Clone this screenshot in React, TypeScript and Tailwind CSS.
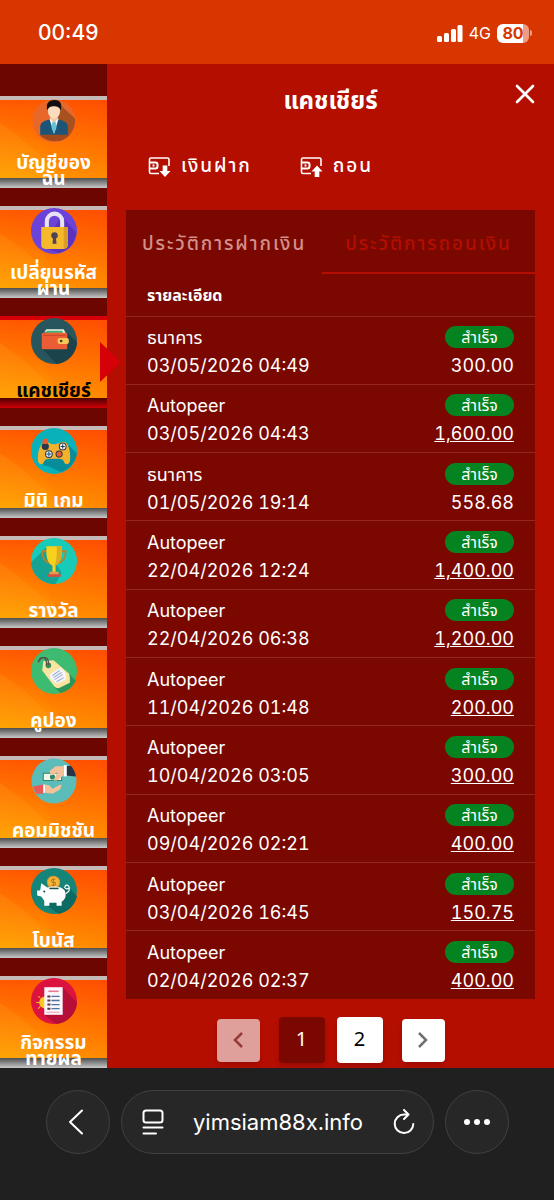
import { useState } from 'react';
import { LuX } from 'react-icons/lu';

interface MenuItem {
  id: string;
  label: string;
  art: React.ReactNode;
}

interface Transaction {
  id: number;
  channel: string;
  date: string;
  amount: string;
  hasDetail: boolean;
}

const AccountArt = () => (
  <>
    <circle cx="22.500" cy="22.500" r="21" fill="#e8682c" />
    <path d="M28 6L43 20A21 21 0 0 1 28 42L9 35Z" fill="#a9501f" />
    <path d="M8 36H38A21 21 0 0 1 8 36Z" fill="#a24a1c" />
    <path d="M9 36V28C9 24 13 22 18 21H27C32 22 36 24 36 28V36Z" fill="#1d5579" />
    <path d="M18 20L22.500 35L27 20Z" fill="#fff" />
    <path d="M21 23H24L25 29L22.500 35L20 29Z" fill="#65c3d6" />
    <path d="M19 15H26V21L22.500 24L19 21Z" fill="#f1c9a5" />
    <ellipse cx="22.500" cy="12.500" rx="6" ry="7.500" fill="#fbdcbc" />
    <path d="M16 12C14 5 18 2 23 2S31 5 29 12C28 9 26 8 22 8C19 8 17 9 16 12Z" fill="#15100f" />
  </>
);

const LockArt = () => (
  <>
    <circle cx="22.500" cy="22.500" r="22.500" fill="#6c43d8" />
    <path d="M30 8L44 24A22 22 0 0 1 27 44L11 38L22 20Z" fill="#5932bd" />
    <path d="M15.500 20V13A7.500 7.500 0 0 1 30.500 13V20" fill="none" stroke="#e7e3f5" strokeWidth="4" />
    <path d="M10 18.500H36V36Q36 40 32 40H14Q10 40 10 36Z" fill="#f5b92c" />
    <path d="M32 18.500H36V36Q36 40 32 40Z" fill="#dc9c25" />
    <circle cx="23" cy="27" r="3.200" fill="#514357" />
    <path d="M21.800 28H24.200L25 35H21Z" fill="#514357" />
  </>
);

const WalletArt = () => (
  <>
    <circle cx="22.500" cy="22.500" r="22.500" fill="#27565e" />
    <path d="M36 15L45 24A22.500 22.500 0 0 1 25 45L11 30Z" fill="#1b434b" />
    <path d="M13 14L15 11H32L34 15Z" fill="#e9f3e7" />
    <path d="M15 13.500H31" stroke="#3db16d" strokeWidth="2" />
    <rect x="10.500" y="14.500" width="25" height="16" rx="1.500" fill="#ed5d35" />
    <path d="M12 17H34" stroke="#c9482a" strokeWidth="1" />
    <rect x="26" y="19.500" width="11" height="6" rx="2" fill="#f7c659" />
    <circle cx="29.500" cy="22.500" r="1.300" fill="#45322c" />
  </>
);

const GameArt = () => (
  <>
    <circle cx="22.500" cy="22.500" r="22.500" fill="#09b1bb" />
    <path d="M37 17L45 25A22.500 22.500 0 0 1 29 43L10 34Z" fill="#078d9a" />
    <path d="M12 14C16 12 18 16 22.500 16S30 12 34 14C38 18 39 27 38 33C36 37 33 36 31 31H14C12 36 9 37 7 33C6 25 8 18 12 14Z" fill="#f4b12d" />
    <path d="M12 37Q12 30 18 30H27Q33 30 33 37Z" fill="#078d9a" />
    <circle cx="14" cy="18" r="3.500" fill="#26394d" />
    <path d="M14 12V19" stroke="#26394d" strokeWidth="2" />
    <circle cx="14" cy="13" r="2.800" fill="#f0592b" />
    <circle cx="31" cy="18" r="3.300" fill="#f4f6f8" stroke="#26394d" strokeWidth="1" />
    <path d="M31 16V20M29 18H33" stroke="#26394d" strokeWidth="1" />
    <circle cx="17.500" cy="25.500" r="3.300" fill="#f4f6f8" stroke="#26394d" strokeWidth="1" />
    <path d="M17.500 23V28M15 25.500H20" stroke="#3567a0" strokeWidth="1.300" />
    <circle cx="27.500" cy="25.500" r="3" fill="#ef5a2b" stroke="#26394d" strokeWidth="1" />
  </>
);

const TrophyArt = () => (
  <>
    <circle cx="22.500" cy="22.500" r="22.500" fill="#18cbb9" />
    <path d="M0 24L15 9L30 34L24 45A22.500 22.500 0 0 1 0 24Z" fill="#16a394" />
    <path d="M16 13H11C11 20 14 24 20 25M29 13H34C34 20 31 24 25 25" fill="none" stroke="#b9812c" strokeWidth="1.800" />
    <path d="M15 8H30V14C30 21 27 26 24 27V34H21V27C18 26 15 21 15 14Z" fill="#f6d21f" />
    <path d="M25 8H30V14C30 21 27 26 24 27H23Q26 20 25 8Z" fill="#e0aa1e" />
    <rect x="18" y="33" width="9" height="3" fill="#ea974a" />
    <rect x="16" y="35.500" width="13" height="2.500" fill="#dc4c3f" />
  </>
);

const TagArt = () => (
  <>
    <circle cx="22.500" cy="22.500" r="22.500" fill="#3dbb70" />
    <path d="M37 25L44 32A22.500 22.500 0 0 1 29 44L22 38Z" fill="#2c9658" />
    <path d="M12 13L22 12L37 25Q38 27 38 30V34L28 39Q25 40 23 38L11 22Z" fill="#fbe4a0" />
    <path d="M18 26L29 19L34 25V31L25 35L19 30Z" fill="#f4f6fc" />
    <path d="M21 27L28 22M22 29L30 24M23 31L31 26M25 33L32 29" stroke="#9ca9d0" strokeWidth="1" />
    <circle cx="17" cy="17" r="2.700" fill="#348e5b" />
    <path d="M17 17C18 8 11 7 7 14C9 7 16 8 15 17" fill="none" stroke="#55514b" strokeWidth="1.200" />
  </>
);

const HandsArt = () => (
  <>
    <circle cx="22.500" cy="22.500" r="22" fill="#5bbdb9" />
    <path d="M34 8L39 7.500Q43 12 44 18L34 17Z" fill="#273345" />
    <path d="M32 7H35V18H32Z" fill="#fff" />
    <path d="M12 15H30V22H12Z" fill="#eef7e8" stroke="#31866c" strokeWidth="1" />
    <circle cx="21" cy="18.500" r="2.500" fill="#31866c" />
    <path d="M32 8H24L18 13L20 17L26 14L22 22L25 22L32 17Z" fill="#f5c198" />
    <path d="M2 28L12 26V35L5 35Z" fill="#e95859" />
    <path d="M12 26H14V34H12Z" fill="#fff" />
    <path d="M14 26L18 27L21 30L29 26Q31 27 28 31L21 35L14 34Z" fill="#f5c198" />
  </>
);

const PiggyArt = () => (
  <>
    <circle cx="22.500" cy="22.500" r="22.500" fill="#158579" />
    <path d="M37 19L45 28A22.500 22.500 0 0 1 27 45L13 35L24 20Z" fill="#0b6b62" />
    <circle cx="22" cy="14" r="6" fill="#f4b638" stroke="#e0982b" strokeWidth="1" />
    <path d="M24 11H21Q19 12 21 14H23Q25 15 23 17H20M22 10V18" stroke="#b47727" strokeWidth="1" fill="none" />
    <path d="M34 25Q39 22 37 18Q34 15 33 19Q34 22 38 19" fill="none" stroke="#fff" strokeWidth="1.200" />
    <path d="M10 15L16 19Q28 16 33 22Q36 29 30 33V37H25V34H18V37H13V32L10 28L6 27V22L9 22Z" fill="#fff" />
    <path d="M18 20H27" stroke="#18534d" strokeWidth="1.500" />
    <circle cx="13" cy="23" r="1" fill="#244b47" />
  </>
);

const ActivityArt = () => (
  <>
    <circle cx="22.500" cy="22.500" r="22.500" fill="#dc123f" />
    <path d="M31 9L45 24A22.500 22.500 0 0 1 25 45L13 36Z" fill="#b50e38" />
    <path d="M14 18A6 6 0 0 0 14 30Z" fill="#fbc91f" />
    <path d="M5 24H8M7 18L9 19M7 30L9 28" stroke="#fbc91f" strokeWidth="1" />
    <path d="M13 9H31V36H13Z" fill="#faf6fb" />
    <path d="M17 13H27" stroke="#ea7891" strokeWidth="1.500" />
    <path d="M16 18H19M16 22H19M16 26H19M16 30H19" stroke="#55394c" strokeWidth="2" />
    <path d="M20 18H28M20 22H28M20 26H28M20 30H28" stroke="#4b74a0" strokeWidth="1.300" />
    <path d="M15 33.500H28" stroke="#ef9bb0" strokeWidth="1" />
  </>
);

const menuItems: MenuItem[] = [
  { id: 'account', label: 'บัญชีของฉัน', art: <AccountArt /> },
  { id: 'password', label: 'เปลี่ยนรหัสผ่าน', art: <LockArt /> },
  { id: 'cashier', label: 'แคชเชียร์', art: <WalletArt /> },
  { id: 'games', label: 'มินิ เกม', art: <GameArt /> },
  { id: 'rewards', label: 'รางวัล', art: <TrophyArt /> },
  { id: 'coupon', label: 'คูปอง', art: <TagArt /> },
  { id: 'commission', label: 'คอมมิชชัน', art: <HandsArt /> },
  { id: 'bonus', label: 'โบนัส', art: <PiggyArt /> },
  { id: 'activity', label: 'กิจกรรมทายผล', art: <ActivityArt /> },
];

const transactions: Transaction[] = [
  { id: 1, channel: 'ธนาคาร', date: '03/05/2026 04:49', amount: '300.00', hasDetail: false },
  { id: 2, channel: 'Autopeer', date: '03/05/2026 04:43', amount: '1,600.00', hasDetail: true },
  { id: 3, channel: 'ธนาคาร', date: '01/05/2026 19:14', amount: '558.68', hasDetail: false },
  { id: 4, channel: 'Autopeer', date: '22/04/2026 12:24', amount: '1,400.00', hasDetail: true },
  { id: 5, channel: 'Autopeer', date: '22/04/2026 06:38', amount: '1,200.00', hasDetail: true },
  { id: 6, channel: 'Autopeer', date: '11/04/2026 01:48', amount: '200.00', hasDetail: true },
  { id: 7, channel: 'Autopeer', date: '10/04/2026 03:05', amount: '300.00', hasDetail: true },
  { id: 8, channel: 'Autopeer', date: '09/04/2026 02:21', amount: '400.00', hasDetail: true },
  { id: 9, channel: 'Autopeer', date: '03/04/2026 16:45', amount: '150.75', hasDetail: true },
  { id: 10, channel: 'Autopeer', date: '02/04/2026 02:37', amount: '400.00', hasDetail: true },
];

function StatusBar() {
  return (
    <div className="h-16 bg-[#d73600] flex items-center justify-between pl-[38px] pr-[22px] pt-0.5 text-white font-['Inter',sans-serif]">
      <span className="text-[21px] font-medium">00:49</span>
      <div className="flex items-center gap-1.5">
        <svg width="26" height="17" viewBox="0 0 26 17" fill="#fff">
          <rect x="0" y="11" width="5" height="6" rx="1.500" />
          <rect x="7" y="8" width="5" height="9" rx="1.500" />
          <rect x="14" y="4" width="5" height="13" rx="1.500" />
          <rect x="20.500" y="0" width="5" height="17" rx="1.500" />
        </svg>
        <span className="text-[16px]">4G</span>
        <div className="flex items-center gap-px">
          <div className="w-8 h-[19px] rounded-md bg-linear-to-r from-white from-80% to-[#ef9c82] to-80% text-[#d73600] text-[16px] font-bold flex items-center justify-center">80</div>
          <div className="w-0.5 h-1.5 rounded-r-full bg-[#ef9c82]" />
        </div>
      </div>
    </div>
  );
}

function SideButton({ item, active, onSelect }: { item: MenuItem; active: boolean; onSelect: () => void }) {
  return (
    <button
      onClick={onSelect}
      aria-current={active ? 'page' : undefined}
      className="relative block w-full h-[92px] shrink-0"
    >
      <svg className="absolute inset-0 w-full h-full" viewBox="0 0 107 92" preserveAspectRatio="none">
        <defs>
          <linearGradient id={`fill-${item.id}`} x1="0.700" y1="0" x2="0.500" y2="1">
            <stop offset="0" stopColor="#ff4a00" />
            <stop offset="1" stopColor="#ffa200" />
          </linearGradient>
          <linearGradient id={`bar-${item.id}`} x1="0" y1="0" x2="0" y2="1">
            <stop offset="0" stopColor={active ? '#4d0000' : '#4e4e4e'} />
            <stop offset="1" stopColor={active ? '#d00008' : '#c9c9c9'} />
          </linearGradient>
        </defs>
        <rect width="107" height="92" fill={`url(#fill-${item.id})`} />
        <path d="M0 27Q30 47 43 43Q49 62 61 82H107V4H27Z" fill="#ff6a00" opacity="0.150" />
        <path d="M0 27Q35 50 61 82H0Z" fill="#ffbf30" opacity="0.120" />
        <rect width="107" height="4" fill={active ? '#d60008' : '#c5bab8'} />
        <rect y="82" width="107" height="10" fill={`url(#bar-${item.id})`} />
      </svg>
      <div className="relative h-full flex flex-col items-center pt-0.5">
        <svg width="46" height="46" viewBox="0 0 45 45" className="shrink-0">
          {item.art}
        </svg>
        <div className={`flex-1 w-full flex flex-col justify-center px-2 pt-3 text-[19px] leading-4 font-bold ${active ? 'text-black' : 'text-white'}`}>
          {item.label}
        </div>
      </div>
      {active && (
        <svg className="absolute left-full top-[26px] -ml-[7px]" width="21" height="40" viewBox="0 0 21 40">
          <path d="M0 0L21 20L0 40Z" fill="#d60008" />
        </svg>
      )}
    </button>
  );
}

function CardIcon({ up }: { up?: boolean }) {
  return (
    <svg width="23" height="20" viewBox="0 0 22 20" fill="none" stroke="#fff" strokeWidth="1.600">
      <path d="M10.500 16.500H2.500Q1 16.500 1 15V2.500Q1 1 2.500 1H19Q20.500 1 20.500 2.500V9" />
      <path d="M1 5.500H7Q9 5.500 9 7.500V9.500Q9 11.500 7 11.500H1" strokeWidth="2" />
      <path d="M4 8.500H6" strokeWidth="2" />
      {up ? (
        <path d="M16.500 8.500L22 14.500H18.800V20H14.200V14.500H11Z" fill="#fff" stroke="none" />
      ) : (
        <path d="M16.500 20L22 14H18.800V8.500H14.200V14H11Z" fill="#fff" stroke="none" />
      )}
    </svg>
  );
}

function BrowserBar() {
  return (
    <div className="h-[132px] bg-[#202020] text-white flex items-start justify-center gap-[11px] px-10 pt-[22px] font-['Inter',sans-serif]">
      <button aria-label="Back" className="size-16 shrink-0 rounded-full border border-[#404040] bg-[#272727] flex items-center justify-center pr-1">
        <svg width="16" height="26" viewBox="0 0 16 26" fill="none" stroke="#fff" strokeWidth="2" strokeLinecap="round" strokeLinejoin="round">
          <path d="M14 1.500L2 13L14 24.500" />
        </svg>
      </button>
      <div className="flex-1 max-w-[313px] h-16 rounded-full border border-[#404040] bg-[#272727] flex items-center justify-between pl-5 pr-[18px]">
        <button aria-label="Page menu">
          <svg width="22" height="26" viewBox="0 0 22 26" fill="none" stroke="#fff" strokeWidth="2" strokeLinecap="round">
            <rect x="1.500" y="1.500" width="19" height="12" rx="2.500" />
            <path d="M1.500 18.500H20.500M1.500 24.500H14" />
          </svg>
        </button>
        <span className="text-[22px]">yimsiam88x.info</span>
        <button aria-label="Reload">
          <svg width="22" height="26" viewBox="0 0 22 26" fill="none" stroke="#fff" strokeWidth="2" strokeLinecap="round" strokeLinejoin="round">
            <path d="M15 5.500H11A9.300 9.300 0 1 0 20.300 15M11 1L15.500 5.500L11 10" />
          </svg>
        </button>
      </div>
      <button aria-label="More" className="size-16 shrink-0 rounded-full border border-[#404040] bg-[#272727] flex items-center justify-center gap-1">
        <span className="size-1.5 rounded-full bg-white" />
        <span className="size-1.5 rounded-full bg-white" />
        <span className="size-1.5 rounded-full bg-white" />
      </button>
    </div>
  );
}

export default function App() {
  const [section, setSection] = useState('cashier');
  const [tab, setTab] = useState('withdraw');
  const [page, setPage] = useState(1);

  const tabClass = (name: string) =>
    tab === name ? 'text-[#b30e00] border-[#b30e00]' : 'text-[#d38f8a] border-transparent';

  const pageClass = (n: number) =>
    page === n ? 'bg-[#7a0800] text-white' : 'bg-white text-black';

  return (
    <div className="min-h-screen flex flex-col bg-[#202020] font-['Noto_Sans_Thai','Inter',sans-serif]">
      <StatusBar />

      <div className="flex bg-[#b30e00]">
        <nav className="w-[107px] shrink-0 bg-[#6b0600] pt-8 flex flex-col gap-[18px]">
          {menuItems.map((item) => (
            <SideButton key={item.id} item={item} active={section === item.id} onSelect={() => setSection(item.id)} />
          ))}
        </nav>

        <main className="flex-1 min-w-0 flex flex-col px-[19px] text-white">
          <header className="relative h-[72px] pt-1 flex items-center justify-center">
            <h1 className="text-[24px] font-bold">แคชเชียร์</h1>
            <button aria-label="Close" className="absolute -right-1.5 top-3.5">
              <LuX size={32} />
            </button>
          </header>

          <div className="h-[74px] pl-[22px] pb-3 flex items-center gap-12 text-[19px] font-medium tracking-widest">
            <button className="flex items-center gap-2.5">
              <CardIcon /> เงินฝาก
            </button>
            <button className="flex items-center gap-2.5">
              <CardIcon up /> ถอน
            </button>
          </div>

          <section className="bg-[#7a0800]">
            <div className="flex h-16 text-[19px] font-medium tracking-widest">
              <button onClick={() => setTab('deposit')} className={`px-4 pt-2 whitespace-nowrap border-b-2 ${tabClass('deposit')}`}>
                ประวัติการฝากเงิน
              </button>
              <button onClick={() => setTab('withdraw')} className={`flex-1 pt-2 whitespace-nowrap border-b-2 ${tabClass('withdraw')}`}>
                ประวัติการถอนเงิน
              </button>
            </div>

            <table className="w-full h-[725px] tabular-nums font-['Inter','Noto_Sans_Thai',sans-serif]">
              <thead>
                <tr className="h-[42px]">
                  <th colSpan={2} className="pl-[21px] text-left text-[16px] font-bold">รายละเอียด</th>
                </tr>
              </thead>
              <tbody>
                {transactions.map((t) => (
                  <tr key={t.id} className="h-[68px] border-t border-[#932620] text-[18px] leading-7">
                    <td className="p-0 pt-1 pl-[21px]">
                      <div>{t.channel}</div>
                      <div>{t.date}</div>
                    </td>
                    <td className="p-0 pt-1 pr-[21px] text-right">
                      <div className="h-7 pt-0.5 flex items-start justify-end">
                        <span className="w-[69px] h-[22px] rounded-full bg-[#058320] text-[16px] leading-[22px] text-center">สำเร็จ</span>
                      </div>
                      {t.hasDetail ? <a href="#detail" className="underline">{t.amount}</a> : <span>{t.amount}</span>}
                    </td>
                  </tr>
                ))}
              </tbody>
            </table>
          </section>

          <div className="pt-[18px] flex justify-center text-[20px]">
            <div className="flex items-center">
              <button aria-label="Previous page" disabled={page === 1} className="size-[43px] mr-[19px] rounded bg-white disabled:bg-[#df9f9a] text-[#6f6f6f] disabled:text-[#9a3a36] flex items-center justify-center shadow-md">
                <svg width="10" height="16" viewBox="0 0 10 16" fill="none" stroke="currentColor" strokeWidth="2.500"><path d="M9 1L2 8L9 15" /></svg>
              </button>
              <button onClick={() => setPage(1)} className={`size-[46px] mr-3 rounded shadow-md ${pageClass(1)}`}>1</button>
              <button onClick={() => setPage(2)} className={`size-[46px] mr-[19px] rounded shadow-md ${pageClass(2)}`}>2</button>
              <button aria-label="Next page" onClick={() => setPage(2)} className="size-[43px] rounded bg-white text-[#6f6f6f] flex items-center justify-center shadow-md">
                <svg width="10" height="16" viewBox="0 0 10 16" fill="none" stroke="currentColor" strokeWidth="2.500"><path d="M1 1L8 8L1 15" /></svg>
              </button>
            </div>
          </div>
        </main>
      </div>

      <BrowserBar />
    </div>
  );
}
